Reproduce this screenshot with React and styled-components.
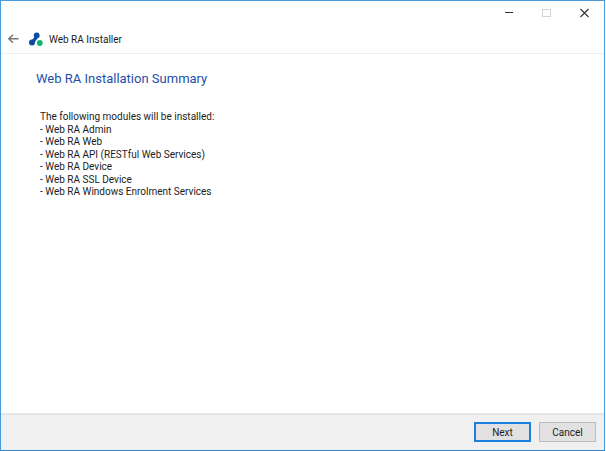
import React from "react";
import styled, { createGlobalStyle } from "styled-components";

const GlobalStyle = createGlobalStyle`
  * { box-sizing: border-box; }
  body {
    margin: 0;
    background: #fff;
    font-family: Roboto, "Open Sans", sans-serif;
    font-size: 10px;
    color: #1c1c1c;
  }
`;

const Window = styled.main`
  display: flex;
  flex-direction: column;
  min-height: 100vh;
  margin-right: 1px;
  background: #fff;
  border: 1px solid #4a9bdc;
  border-bottom-color: #3585cc;
`;

const TitleBar = styled.header`
  border-bottom: 1px solid #efefef;
`;

const WindowControls = styled.div`
  display: flex;
  justify-content: flex-end;
  height: 24px;
`;

const ControlButton = styled.button`
  display: flex;
  align-items: center;
  justify-content: center;
  width: 38px;
  padding: 0;
  border: 0;
  background: none;
  color: ${(p) => (p.disabled ? "#d4d4d4" : "#333")};
`;

const TitleRow = styled.div`
  display: flex;
  align-items: center;
  height: 28px;
  padding-left: 6px;
`;

const BackButton = styled.button`
  display: flex;
  padding: 0;
  margin-right: 8px;
  border: 0;
  background: none;
  color: #777;
`;

const Title = styled.span`
  margin-left: 5px;
`;

const Content = styled.section`
  flex: 1;
  padding: 16px 35px;
`;

const Heading = styled.h1`
  margin: 0;
  font-size: 13px;
  line-height: 18px;
  font-weight: 400;
  color: #1f4fa8;
`;

const Summary = styled.div`
  padding: 23px 4px 0;
  line-height: 1.25;
`;

const Intro = styled.p`
  margin: 0;
`;

const ModuleList = styled.ul`
  margin: 0;
  padding: 0;
  list-style: none;
`;

const Footer = styled.footer`
  display: flex;
  justify-content: flex-end;
  gap: 8px;
  padding: 7px 8px 8px;
  background: #f0f0f0;
  border-top: 2px solid #e6e6e6;
`;

const ActionButton = styled.button`
  width: 57px;
  height: 20px;
  padding: 0;
  font: inherit;
  color: #1c1c1c;
  background: #e1e1e1;
  border: ${(p) => (p.$primary ? "2px solid #1b7fdc" : "1px solid #bcbcbc")};
`;

const modules = [
  "Web RA Admin",
  "Web RA Web",
  "Web RA API (RESTful Web Services)",
  "Web RA Device",
  "Web RA SSL Device",
  "Web RA Windows Enrolment Services",
];

const MinimizeIcon = () => (
  <svg width="10" height="10" viewBox="0 0 10 10" aria-hidden="true">
    <path d="M1 4.5H9" stroke="currentColor" />
  </svg>
);

const MaximizeIcon = () => (
  <svg width="10" height="10" viewBox="0 0 10 10" aria-hidden="true">
    <rect x="0.5" y="1.5" width="8" height="7" fill="none" stroke="currentColor" />
  </svg>
);

const CloseIcon = () => (
  <svg width="10" height="10" viewBox="0 0 10 10" aria-hidden="true">
    <path d="M0.5 1L8.5 9M8.5 1L0.5 9" stroke="currentColor" strokeWidth="1.1" />
  </svg>
);

const BackIcon = () => (
  <svg width="13" height="12" viewBox="0 0 13 12" aria-hidden="true">
    <path d="M6 1.7L1.8 5.7L6 9.7M1.8 5.7H11.5" fill="none" stroke="currentColor" strokeWidth="1.5" />
  </svg>
);

const Logo = () => (
  <svg width="16" height="16" viewBox="0 0 16 16" aria-hidden="true">
    <path d="M8.6 4.5Q7.8 8.8 4 11.2" fill="none" stroke="#0b4da2" strokeWidth="3.2" />
    <circle cx="8.7" cy="4.4" r="2.9" fill="#0b4da2" />
    <circle cx="4" cy="11.6" r="3" fill="#0b4da2" />
    <circle cx="11.8" cy="12" r="2.9" fill="#0fb56d" />
  </svg>
);

export default function App() {
  return (
    <>
      <GlobalStyle />
      <Window>
        <TitleBar>
          <WindowControls>
            <ControlButton aria-label="Minimize"><MinimizeIcon /></ControlButton>
            <ControlButton aria-label="Maximize" disabled><MaximizeIcon /></ControlButton>
            <ControlButton aria-label="Close"><CloseIcon /></ControlButton>
          </WindowControls>
          <TitleRow>
            <BackButton aria-label="Back"><BackIcon /></BackButton>
            <Logo />
            <Title>Web RA Installer</Title>
          </TitleRow>
        </TitleBar>
        <Content>
          <Heading>Web RA Installation Summary</Heading>
          <Summary>
            <Intro>The following modules will be installed:</Intro>
            <ModuleList>
              {modules.map((name) => (
                <li key={name}>- {name}</li>
              ))}
            </ModuleList>
          </Summary>
        </Content>
        <Footer>
          <ActionButton $primary>Next</ActionButton>
          <ActionButton>Cancel</ActionButton>
        </Footer>
      </Window>
    </>
  );
}
